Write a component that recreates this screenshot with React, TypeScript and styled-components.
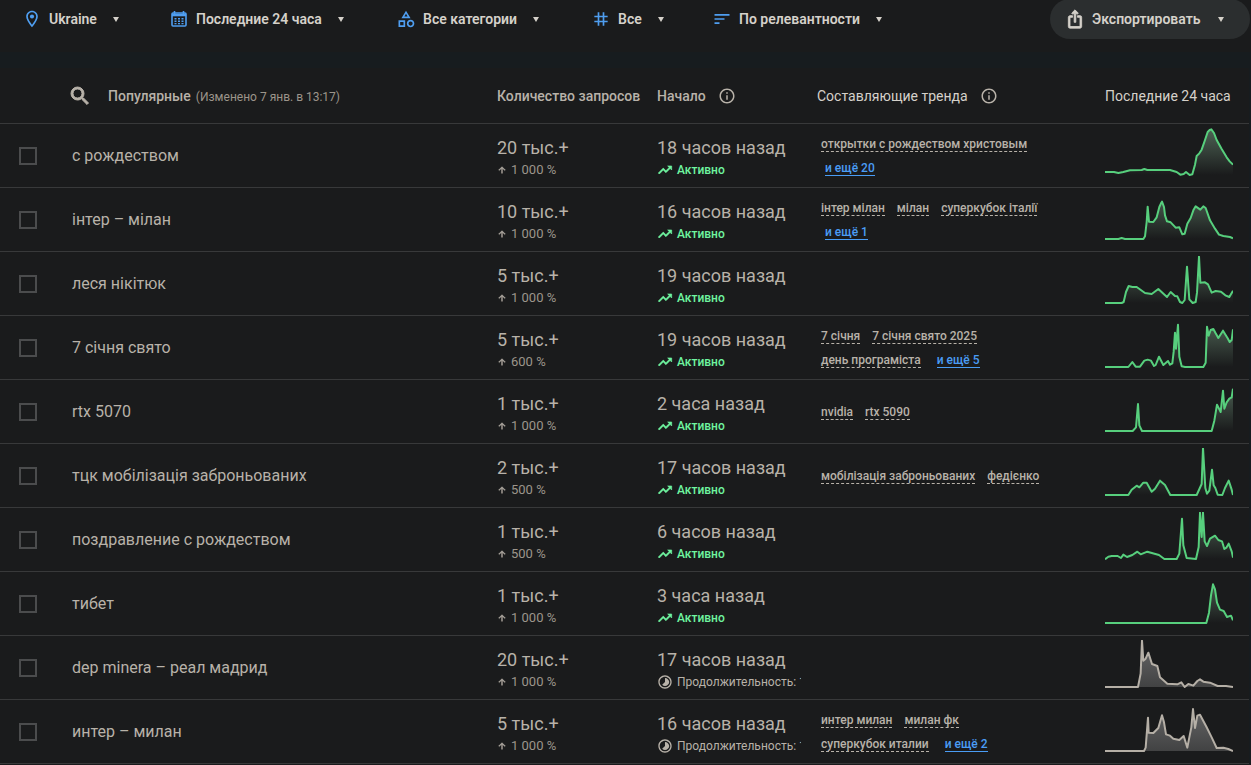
import React from 'react';
import styled, { createGlobalStyle, css } from 'styled-components';
import {
  MdOutlineLocationOn,
  MdOutlineCategory,
  MdTag,
  MdSort,
  MdIosShare,
  MdSearch,
  MdInfoOutline,
  MdTrendingUp,
  MdArrowUpward,
  MdTimelapse,
} from 'react-icons/md';

const color = {
  page: '#1a1b1c',
  band: '#171c1f',
  line: '#38393a',
  blue: '#4f9ef0',
  link: '#4a9df5',
  green: '#6ff5a0',
  chartGreen: '#57cf7d',
  chartGrey: '#b5afa6',
  bright: '#d5d1ca',
  text: '#b8b2a9',
  dim: '#9c958b',
};

const GlobalStyle = createGlobalStyle`
  * { box-sizing: border-box; }
  body {
    margin: 0;
    background: ${color.page};
    color: ${color.text};
    font-family: Roboto, Inter, "Liberation Sans", sans-serif;
    overflow: hidden;
  }
  button { font: inherit; color: inherit; background: none; border: 0; padding: 0; cursor: pointer; }
`;

/* Thickens a Material glyph without outlining its transparent bounding box. */
const boldGlyph = css`
  & > :not([fill='none']) {
    stroke-width: 1;
  }
`;

const Toolbar = styled.header`
  display: flex;
  align-items: flex-start;
  justify-content: space-between;
  height: 52px;
  padding: 0 1px 0 22px;
`;

const Filters = styled.div`
  display: flex;
`;

const FilterButton = styled.button<{ $width: number }>`
  display: flex;
  align-items: center;
  min-width: ${(p) => p.$width}px;
  height: 38px;
  font-size: 14px;
  font-weight: 600;
  color: ${color.bright};
  white-space: nowrap;

  svg {
    width: 20px;
    height: 20px;
    margin-right: 7px;
    color: ${color.blue};
  }
`;

const Caret = styled.span`
  margin-left: 16px;
  border: 3px solid transparent;
  border-top: 5px solid ${color.bright};
  border-bottom: 0;
`;

const ExportButton = styled.button`
  display: flex;
  align-items: center;
  min-width: 200px;
  height: 40px;
  margin-top: -1px;
  padding: 0 26px 0 15px;
  border-radius: 20px;
  background: #2b2e2f;
  color: ${color.bright};
  font-size: 14px;
  font-weight: 600;
  white-space: nowrap;

  svg {
    width: 20px;
    height: 20px;
    margin-right: 7px;
    ${boldGlyph}
  }

  ${Caret} {
    margin-left: auto;
  }
`;

const Band = styled.div`
  height: 16px;
  background: ${color.band};
`;

const Panel = styled.main`
  padding-right: 2px;
  background: ${color.band};
`;

const Table = styled.table`
  width: 100%;
  table-layout: fixed;
  border-collapse: separate;
  border-spacing: 0;
  background: ${color.page};
`;

const Col = styled.col<{ $width?: number }>`
  width: ${(p) => (p.$width ? `${p.$width}px` : 'auto')};
`;

const Th = styled.th<{ $bright?: boolean }>`
  height: 56px;
  padding: 0 0 0 16px;
  border-bottom: 1px solid ${color.line};
  color: ${(p) => (p.$bright ? color.bright : color.text)};
  font-size: 14px;
  font-weight: ${(p) => (p.$bright ? 400 : 500)};
  text-align: left;
  white-space: nowrap;
  overflow: hidden;
`;

const HeadContent = styled.div`
  display: flex;
  align-items: center;
  gap: 12px;

  svg { flex: none; }
`;

const InfoIcon = styled(MdInfoOutline)`
  width: 18px;
  height: 18px;
  color: ${color.text};
`;

const SearchButton = styled.button`
  display: flex;
  margin: 0 4px 0 -4px;

  svg {
    ${boldGlyph}
  }
`;

const Updated = styled.span`
  margin-left: 5px;
  color: ${color.dim};
  font-size: 12px;
  font-weight: 400;
`;

const Td = styled.td`
  height: 64px;
  padding: 0 0 0 16px;
  border-bottom: 1px solid ${color.line};
  overflow: hidden;
  white-space: nowrap;
`;

const CheckBox = styled.input`
  appearance: none;
  display: block;
  width: 18px;
  height: 18px;
  margin: 1px 0 0 3px;
  border: 2px solid #4b4c4d;
`;

const Query = styled.label`
  display: block;
  font-size: 16px;
  line-height: 22px;
`;

const Metric = styled.div`
  padding-top: 4px;
`;

const Main = styled.div`
  font-size: 18px;
  line-height: 24px;
`;

const Sub = styled.div<{ $active?: boolean; $dim?: boolean }>`
  display: flex;
  align-items: center;
  gap: 4px;
  height: 20px;
  font-size: ${(p) => (p.$dim ? 13 : 12)}px;
  font-weight: ${(p) => (p.$active ? 500 : 400)};
  color: ${(p) => (p.$active ? color.green : p.$dim ? color.dim : color.text)};

  svg { flex: none; }
`;

const UpIcon = styled(MdArrowUpward)`
  width: 10px;
  height: 10px;
  color: ${color.text};
  ${boldGlyph}
`;

const TrendIcon = styled(MdTrendingUp)`
  width: 16px;
  height: 16px;
  ${boldGlyph}
`;

const Terms = styled.div`
  display: flex;
  flex-wrap: wrap;
  column-gap: 12px;
  padding: 0 24px 0 4px;
`;

const Term = styled.a`
  height: 16px;
  margin: 4px 0;
  border-bottom: 1px dashed ${color.text};
  color: ${color.text};
  font-size: 12px;
  font-weight: 500;
  line-height: 17px;
  text-decoration: none;
`;

const More = styled(Term)`
  margin-left: 4px;
  border-bottom: 1px solid ${color.link};
  color: ${color.link};
`;

const ChartCell = styled(Td)`
  padding-bottom: 8px;
`;

const Chart = styled.svg`
  display: block;
  width: 128px;
  height: 48px;
`;

const CalendarIcon = () => (
  <svg viewBox="0 0 20 20" fill="none" stroke="currentColor">
    <rect x="3" y="4" width="14" height="13" rx="1" strokeWidth="1.6" />
    <path d="M3 6h14" strokeWidth="2.6" />
    <path d="M5.5 2v3M14.5 2v3" strokeWidth="1.6" />
    <path d="M5.5 9.8h9M5.5 12.2h9M5.5 14.6h9" strokeDasharray="2 1.5" strokeWidth="1.4" />
  </svg>
);

type Point = [number, number];

const Sparkline = ({ id, points, ended }: { id: string; points: Point[]; ended?: boolean }) => {
  const line = points.map(([x, y]) => `${x},${y}`).join(' L');
  const stroke = ended ? color.chartGrey : color.chartGreen;
  const fill = ended ? '#a8a8a8' : '#8fbf9c';
  return (
    <Chart viewBox="0 0 384 144" role="img" aria-label="Динамика за последние 24 часа">
      <defs>
        <linearGradient id={id} gradientUnits="userSpaceOnUse" x1="0" y1="0" x2="0" y2="141">
          <stop offset="0" stopColor={fill} stopOpacity={ended ? 0.55 : 0.45} />
          <stop offset="1" stopColor={fill} stopOpacity={ended ? 0.28 : 0} />
        </linearGradient>
      </defs>
      <path d={`M0,141 L${line} L384,141 Z`} fill={`url(#${id})`} />
      <path d={`M${line}`} fill="none" stroke={stroke} strokeWidth="6" strokeLinejoin="round" />
    </Chart>
  );
};

interface Trend {
  query: string;
  count: string;
  growth: string;
  started: string;
  ended?: boolean;
  terms: string[];
  more?: number;
  points: Point[];
}

const trends: Trend[] = [
  {
    query: 'с рождеством', count: '20 тыс.+', growth: '1\u00a0000 %', started: '18 часов назад',
    terms: ['открытки с рождеством христовым'], more: 20,
    points: [[0,132],[27,132],[40,135],[55,132],[75,127],[110,126],[118,123],[127,126],[195,126],[215,132],[226,140],[236,138],[243,132],[254,141],[262,139],[270,110],[275,84],[283,76],[290,65],[300,36],[308,12],[314,6],[319,4],[327,15],[335,36],[350,63],[365,88],[374,100],[384,110]],
  },
  {
    query: 'інтер – мілан', count: '10 тыс.+', growth: '1\u00a0000 %', started: '16 часов назад',
    terms: ['інтер мілан', 'мілан', 'суперкубок італії'], more: 1,
    points: [[0,141],[40,141],[50,138],[60,141],[115,141],[120,133],[125,90],[128,44],[132,89],[145,90],[155,76],[163,45],[168,34],[171,29],[177,45],[180,70],[186,88],[197,91],[212,107],[223,106],[232,127],[239,125],[247,95],[257,78],[265,55],[272,43],[286,53],[295,43],[302,48],[315,85],[330,110],[342,128],[355,132],[375,135],[384,139]],
  },
  {
    query: 'леся нікітюк', count: '5 тыс.+', growth: '1\u00a0000 %', started: '19 часов назад', terms: [],
    points: [[0,141],[50,141],[56,138],[63,108],[71,90],[82,93],[95,93],[120,111],[140,114],[160,99],[186,123],[197,108],[210,120],[217,121],[225,138],[232,141],[239,132],[246,32],[253,130],[263,141],[272,138],[276,110],[282,2],[286,80],[300,79],[309,85],[320,110],[332,105],[348,107],[361,118],[373,123],[384,104]],
  },
  {
    query: '7 січня свято', count: '5 тыс.+', growth: '600 %', started: '19 часов назад',
    terms: ['7 січня', '7 січня свято 2025', 'день програміста'], more: 5,
    points: [[0,141],[70,141],[82,126],[92,140],[105,140],[118,122],[128,119],[138,122],[147,138],[152,135],[162,110],[175,135],[189,123],[195,134],[202,130],[206,95],[210,38],[213,86],[219,14],[223,110],[230,139],[240,141],[295,141],[302,128],[306,20],[311,47],[317,30],[325,27],[332,40],[340,54],[354,32],[368,55],[374,66],[380,60],[384,28]],
  },
  {
    query: 'rtx 5070', count: '1 тыс.+', growth: '1\u00a0000 %', started: '2 часа назад',
    terms: ['nvidia', 'rtx 5090'],
    points: [[0,141],[83,141],[93,130],[99,60],[103,124],[111,141],[320,141],[328,110],[336,62],[347,84],[354,20],[358,74],[365,55],[373,44],[380,40],[384,14]],
  },
  {
    query: 'тцк мобілізація заброньованих', count: '2 тыс.+', growth: '500 %', started: '17 часов назад',
    terms: ['мобілізація заброньованих', 'федієнко'],
    points: [[0,141],[70,141],[80,125],[95,113],[103,118],[115,104],[125,104],[140,131],[150,122],[165,98],[180,111],[196,141],[275,141],[290,108],[294,0],[301,120],[306,137],[313,128],[321,65],[326,112],[331,120],[338,140],[352,141],[360,120],[371,98],[380,125],[384,141]],
  },
  {
    query: 'поздравление с рождеством', count: '1 тыс.+', growth: '500 %', started: '6 часов назад', terms: [],
    points: [[0,142],[10,134],[20,132],[38,132],[48,138],[55,128],[66,135],[82,129],[97,119],[107,127],[127,119],[162,129],[178,141],[215,141],[223,125],[231,20],[235,100],[245,138],[273,141],[281,105],[285,2],[290,75],[294,2],[299,88],[306,102],[315,80],[330,71],[340,84],[351,88],[358,111],[364,107],[371,95],[380,118],[384,137]],
  },
  {
    query: 'тибет', count: '1 тыс.+', growth: '1\u00a0000 %', started: '3 часа назад', terms: [],
    points: [[0,141],[304,141],[312,110],[318,58],[324,25],[330,40],[336,80],[345,101],[356,105],[366,123],[378,119],[384,133]],
  },
  {
    query: 'dep minera – реал мадрид', count: '20 тыс.+', growth: '1\u00a0000 %', started: '17 часов назад', ended: true, terms: [],
    points: [[0,141],[99,141],[107,100],[111,2],[115,62],[122,56],[130,38],[141,72],[157,78],[165,112],[187,131],[217,133],[229,127],[239,141],[250,132],[265,137],[277,123],[285,118],[295,125],[315,128],[338,138],[363,138],[384,141]],
  },
  {
    query: 'интер – милан', count: '5 тыс.+', growth: '1\u00a0000 %', started: '16 часов назад', ended: true,
    terms: ['интер милан', 'милан фк', 'суперкубок италии'], more: 2,
    points: [[0,141],[117,141],[122,131],[129,41],[131,86],[145,87],[160,72],[171,34],[177,55],[183,91],[195,95],[205,104],[223,108],[236,96],[247,131],[254,95],[259,70],[264,15],[270,72],[277,35],[285,32],[305,70],[320,100],[335,132],[355,131],[370,135],[384,141]],
  },
];

const filters = [
  { label: 'Ukraine', icon: <MdOutlineLocationOn />, width: 147 },
  { label: 'Последние 24 часа', icon: <CalendarIcon />, width: 227 },
  { label: 'Все категории', icon: <MdOutlineCategory />, width: 195 },
  { label: 'Все', icon: <MdTag />, width: 121 },
  { label: 'По релевантности', icon: <MdSort />, width: 172 },
];

export default function App() {
  return (
    <>
      <GlobalStyle />
      <Toolbar>
        <Filters>
          {filters.map((f) => (
            <FilterButton key={f.label} $width={f.width}>
              {f.icon}
              {f.label}
              <Caret />
            </FilterButton>
          ))}
        </Filters>
        <ExportButton>
          <MdIosShare />
          Экспортировать
          <Caret />
        </ExportButton>
      </Toolbar>
      <Band />
      <Panel>
        <Table>
          <colgroup>
            <Col $width={56} />
            <Col />
            <Col $width={160} />
            <Col $width={160} />
            <Col $width={288} />
            <Col $width={160} />
          </colgroup>
          <thead>
            <tr>
              <Th />
              <Th>
                <HeadContent>
                  <SearchButton aria-label="Поиск">
                    <MdSearch size={24} />
                  </SearchButton>
                  <span>
                    Популярные
                    <Updated>(Изменено 7 янв. в 13:17)</Updated>
                  </span>
                </HeadContent>
              </Th>
              <Th>Количество запросов</Th>
              <Th>
                <HeadContent>
                  Начало <InfoIcon />
                </HeadContent>
              </Th>
              <Th $bright>
                <HeadContent>
                  Составляющие тренда <InfoIcon />
                </HeadContent>
              </Th>
              <Th $bright>Последние 24 часа</Th>
            </tr>
          </thead>
          <tbody>
            {trends.map((t, i) => (
              <tr key={t.query}>
                <Td>
                  <CheckBox type="checkbox" id={`trend-${i}`} />
                </Td>
                <Td>
                  <Query htmlFor={`trend-${i}`}>{t.query}</Query>
                </Td>
                <Td>
                  <Metric>
                    <Main>{t.count}</Main>
                    <Sub $dim>
                      <UpIcon />
                      {t.growth}
                    </Sub>
                  </Metric>
                </Td>
                <Td>
                  <Metric>
                    <Main>{t.started}</Main>
                    <Sub $active={!t.ended}>
                      {t.ended ? <MdTimelapse size={16} /> : <TrendIcon />}
                      {t.ended ? 'Продолжительность: 1' : 'Активно'}
                    </Sub>
                  </Metric>
                </Td>
                <Td>
                  <Terms>
                    {t.terms.map((term) => (
                      <Term href="#" key={term}>{term}</Term>
                    ))}
                    {t.more && <More href="#">и ещё {t.more}</More>}
                  </Terms>
                </Td>
                <ChartCell>
                  <Sparkline id={`fill-${i}`} points={t.points} ended={t.ended} />
                </ChartCell>
              </tr>
            ))}
          </tbody>
        </Table>
      </Panel>
    </>
  );
}
